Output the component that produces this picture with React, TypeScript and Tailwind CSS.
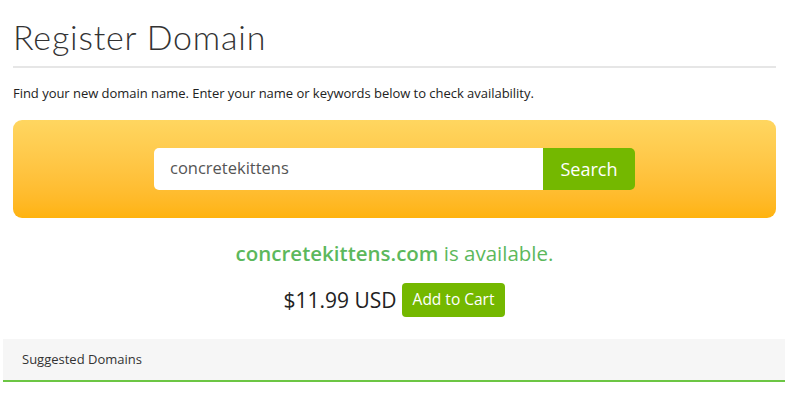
import React from "react";

export default function App() {
  return (
    <div className="w-[800px] h-[400px] overflow-hidden bg-white" style={{ fontFamily: '"Open Sans", "Liberation Sans", sans-serif' }}>
      <div className="w-[789px] px-[13px] pt-[17px]">
        <h1 className="text-[34px] leading-[40px] font-light text-[#333] tracking-[0.8px]" style={{ fontFamily: 'Lato, "Open Sans", sans-serif' }}>
          Register Domain
        </h1>
        <div className="mt-[9px] w-[763px] h-[2px] bg-[#e6e6e6]" />
        <p className="mt-[15px] text-[13px] leading-[20px] text-[#222] tracking-[-0.03px]">
          Find your new domain name. Enter your name or keywords below to check availability.
        </p>
        <div className="mt-[17px] w-[763px] h-[98px] rounded-[9px] bg-gradient-to-b from-[#ffd660] to-[#ffb30d] flex items-center justify-center">
          <div className="flex h-[42px] -mt-[1px]">
            <div className="w-[389px] h-full bg-white rounded-l-[5px] flex items-center pl-[16px] text-[16.5px] text-[#555]">
              concretekittens
            </div>
            <button className="w-[92px] h-full bg-[#74b800] rounded-r-[5px] text-white text-[18px] flex items-center justify-center pt-[2px]">
              Search
            </button>
          </div>
        </div>
        <div className="mt-[21px] flex justify-center text-[20.5px] leading-[28px] text-[#5cb85c]">
          <span className="font-semibold">concretekittens.com</span>
          <span>&nbsp;is available.</span>
        </div>
        <div className="mt-[16px] flex items-center justify-center">
          <span className="text-[21px] text-[#222] leading-[28px]">$11.99 USD</span>
          <button className="ml-[5px] h-[34px] px-[11px] bg-[#74b800] rounded-[4px] text-white text-[15.5px] flex items-center">
            Add to Cart
          </button>
        </div>
      </div>
      <div className="mt-[22px] ml-[3px] w-[782px] h-[43px] bg-[#f6f6f6] border-b-2 border-[#6cc644] flex items-center pl-[19px] pt-[1px] text-[13px] text-[#333]">
        Suggested Domains
      </div>
    </div>
  );
}
